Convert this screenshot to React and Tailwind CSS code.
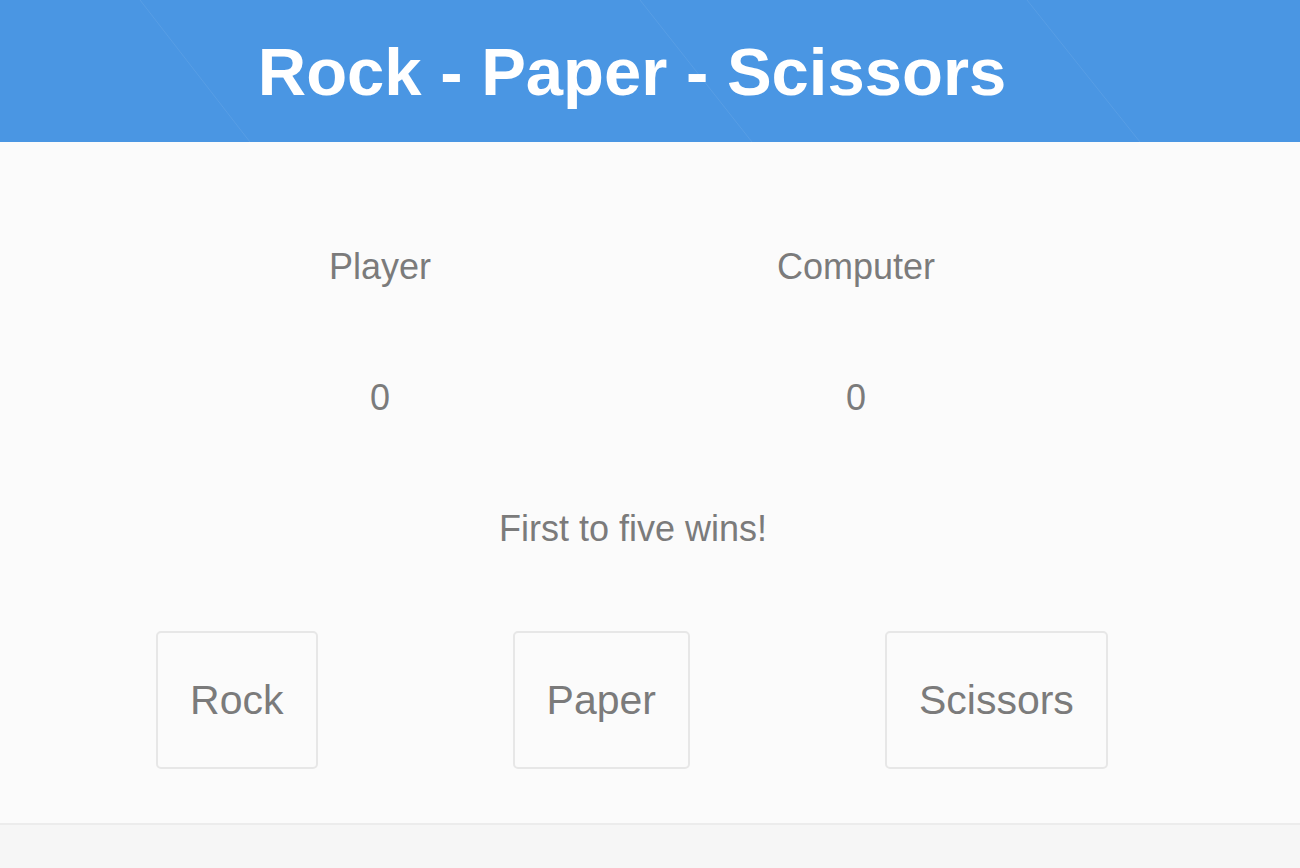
const font = { fontFamily: '"Liberation Sans", Arial, sans-serif' };

const HeaderLines = () => (
    <svg className="absolute inset-0 w-full h-full pointer-events-none" viewBox="0 0 1300 142" preserveAspectRatio="none">
        <g stroke="#ffffff" strokeOpacity="0.08" strokeWidth="1">
            <line x1="140" y1="0" x2="250" y2="142" />
            <line x1="640" y1="0" x2="752" y2="142" />
            <line x1="1027" y1="0" x2="1140" y2="142" />
        </g>
    </svg>
);

const Score = ({ label, value }) => (
    <div className="w-[200px] flex flex-col items-center">
        <p className="text-[36px] leading-[42px]">{label}</p>
        <p className="text-[36px] leading-[42px] mt-[89px]">{value}</p>
    </div>
);

const ChoiceButton = ({ children }) => (
    <button className="px-8 py-[46px] text-[41px] leading-[42px] text-[#7b7b7b] bg-[#fbfbfb] border-2 border-[#e7e7e7] rounded-[5px]">
        {children}
    </button>
);

export default function App() {
    return (
        <div className="min-h-[868px] flex flex-col bg-[#f6f6f6]" style={font}>
            {/* Header */}
            <header className="relative h-[142px] bg-[#4a96e3] flex items-center justify-center overflow-hidden">
                <HeaderLines />
                <h1 className="relative mr-[36px] text-[67px] font-bold text-white leading-none">
                    Rock - Paper - Scissors
                </h1>
            </header>

            {/* Game */}
            <main className="h-[683px] bg-[#fbfbfb] border-b-2 border-[#ececec] text-[#7b7b7b]">
                <div className="flex pt-[104px] pl-[280px] gap-[276px]">
                    <Score label="Player" value="0" />
                    <Score label="Computer" value="0" />
                </div>

                <p className="mt-[89px] text-center text-[36px] leading-[42px] mr-[34px]">First to five wins!</p>

                <div className="mt-[81px] flex justify-center gap-[195px] mr-[36px]">
                    <ChoiceButton>Rock</ChoiceButton>
                    <ChoiceButton>Paper</ChoiceButton>
                    <ChoiceButton>Scissors</ChoiceButton>
                </div>
            </main>

            <footer className="flex-1 bg-[#f6f6f6]"></footer>
        </div>
    );
}
